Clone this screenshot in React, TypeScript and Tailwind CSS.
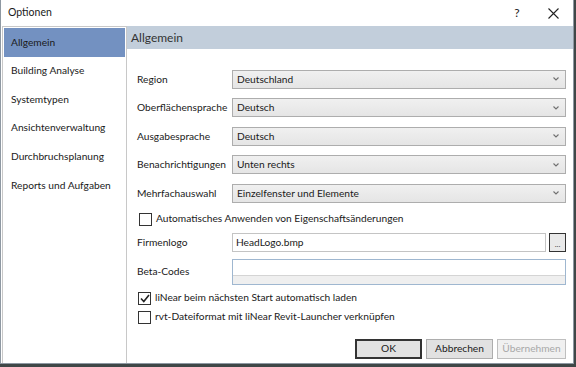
import React from 'react';

const font = { fontFamily: '"Segoe UI", Lato, "Open Sans", sans-serif' };

const navItems = [
  'Allgemein',
  'Building Analyse',
  'Systemtypen',
  'Ansichtenverwaltung',
  'Durchbruchsplanung',
  'Reports und Aufgaben',
];

const Combo: React.FC<{ value: string }> = ({ value }) => (
  <div className="flex h-[19px] w-[334px] items-center justify-between border border-[#adadad] bg-gradient-to-b from-[#f0f0f0] to-[#e5e5e5] pl-[4px] pr-[6px]">
    <span>{value}</span>
    <svg width="6" height="4" viewBox="0 0 6 4" className="text-[#707070]">
      <path d="M0.5 0.5 L3 3 L5.5 0.5" fill="none" stroke="currentColor" strokeWidth="1.1" />
    </svg>
  </div>
);

const Check: React.FC<{ checked?: boolean; label: string }> = ({ checked, label }) => (
  <div className="flex h-[17px] items-center gap-[4px]">
    <div className="flex h-[13px] w-[13px] items-center justify-center border border-[#333] bg-white">
      {checked && (
        <svg width="10" height="9" viewBox="0 0 10 9">
          <path d="M1 4.5 L3.8 7.5 L9 1" fill="none" stroke="#222" strokeWidth="1.6" />
        </svg>
      )}
    </div>
    <span>{label}</span>
  </div>
);

const Row: React.FC<{ label: string; children: React.ReactNode }> = ({ label, children }) => (
  <div className="flex h-[28.5px] items-center">
    <span className="w-[95px] shrink-0">{label}</span>
    {children}
  </div>
);

export default function App() {
  return (
    <div className="relative h-[367px] w-[576px] overflow-hidden bg-[#3f4747] text-[10.2px] text-[#1a1a1a]" style={font}>
      <div className="flex h-[364px] w-[574px] flex-col border-x border-b border-[#8e98a2] bg-white">
        {/* Title bar */}
        <div className="flex h-[26px] shrink-0 items-center justify-between pl-[7px]">
          <span className="text-[10.5px]">Optionen</span>
          <div className="flex items-center">
            <span className="w-[34px] text-center text-[12px]">?</span>
            <span className="flex w-[39px] justify-center">
              <svg width="11" height="11" viewBox="0 0 11 11">
                <path d="M0.5 0.5 L10.5 10.5 M10.5 0.5 L0.5 10.5" stroke="#222" strokeWidth="1.1" />
              </svg>
            </span>
          </div>
        </div>

        <div className="flex min-h-0 flex-1">
          {/* Sidebar */}
          <div className="ml-px w-[125px] shrink-0 border border-b-0 border-[#c8c8c8] pl-px pt-px">
            {navItems.map((item, i) => (
              <div
                key={item}
                className={`flex h-[28.6px] items-center pl-[7px] ${i === 0 ? 'mr-px bg-[#7391c1]' : ''}`}
              >
                {item}
              </div>
            ))}
          </div>

          {/* Content */}
          <div className="flex min-w-0 flex-1 flex-col">
            <div className="flex h-[23px] items-center bg-[#c2cedb] pl-[4px] text-[12px] text-[#333]">Allgemein</div>

            <div className="flex flex-1 flex-col pl-[10px] pr-[7px] pt-[16px]">
              <Row label="Region"><Combo value="Deutschland" /></Row>
              <Row label="Oberflächensprache"><Combo value="Deutsch" /></Row>
              <Row label="Ausgabesprache"><Combo value="Deutsch" /></Row>
              <Row label="Benachrichtigungen"><Combo value="Unten rechts" /></Row>
              <Row label="Mehrfachauswahl"><Combo value="Einzelfenster und Elemente" /></Row>

              <div className="ml-[2px] mt-[3px]">
                <Check label="Automatisches Anwenden von Eigenschaftsänderungen" />
              </div>

              <div className="mt-[5px] flex h-[20px] items-center">
                <span className="w-[95px] shrink-0">Firmenlogo</span>
                <div className="flex h-[19px] w-[315px] items-center border border-[#c4c4c4] pl-[3px]">HeadLogo.bmp</div>
                <div className="ml-[3px] flex h-[19px] w-[17px] items-end justify-center border border-[#333] bg-[#e9e9e9] pb-[3px] text-[8px] leading-none text-[#444]">
                  ...
                </div>
              </div>

              <div className="mt-[6px] flex items-center">
                <span className="w-[95px] shrink-0">Beta-Codes</span>
                <div className="flex h-[26px] w-[334px] flex-col border border-[#9fb7d0]">
                  <div className="h-[15px] bg-white" />
                  <div className="flex-1 border-t border-[#d4d4d4] bg-[#efefef]" />
                </div>
              </div>

              <div className="ml-[1px] mt-[5px] flex flex-col gap-[2px]">
                <Check checked label="liNear beim nächsten Start automatisch laden" />
                <Check label="rvt-Dateiformat mit liNear Revit-Launcher verknüpfen" />
              </div>

              <div className="mt-[13px] flex justify-end gap-[4px]">
                <div className="flex h-[20px] w-[67px] items-center justify-center border-2 border-[#333] bg-[#e1e1e1]">OK</div>
                <div className="flex h-[20px] w-[67px] items-center justify-center border border-[#adadad] bg-[#e1e1e1]">Abbrechen</div>
                <div className="flex h-[20px] w-[69px] items-center justify-center border border-[#bfbfbf] bg-[#f0f0f0] text-[#a8a8a8]">Übernehmen</div>
              </div>
            </div>
          </div>
        </div>
      </div>
    </div>
  );
}
